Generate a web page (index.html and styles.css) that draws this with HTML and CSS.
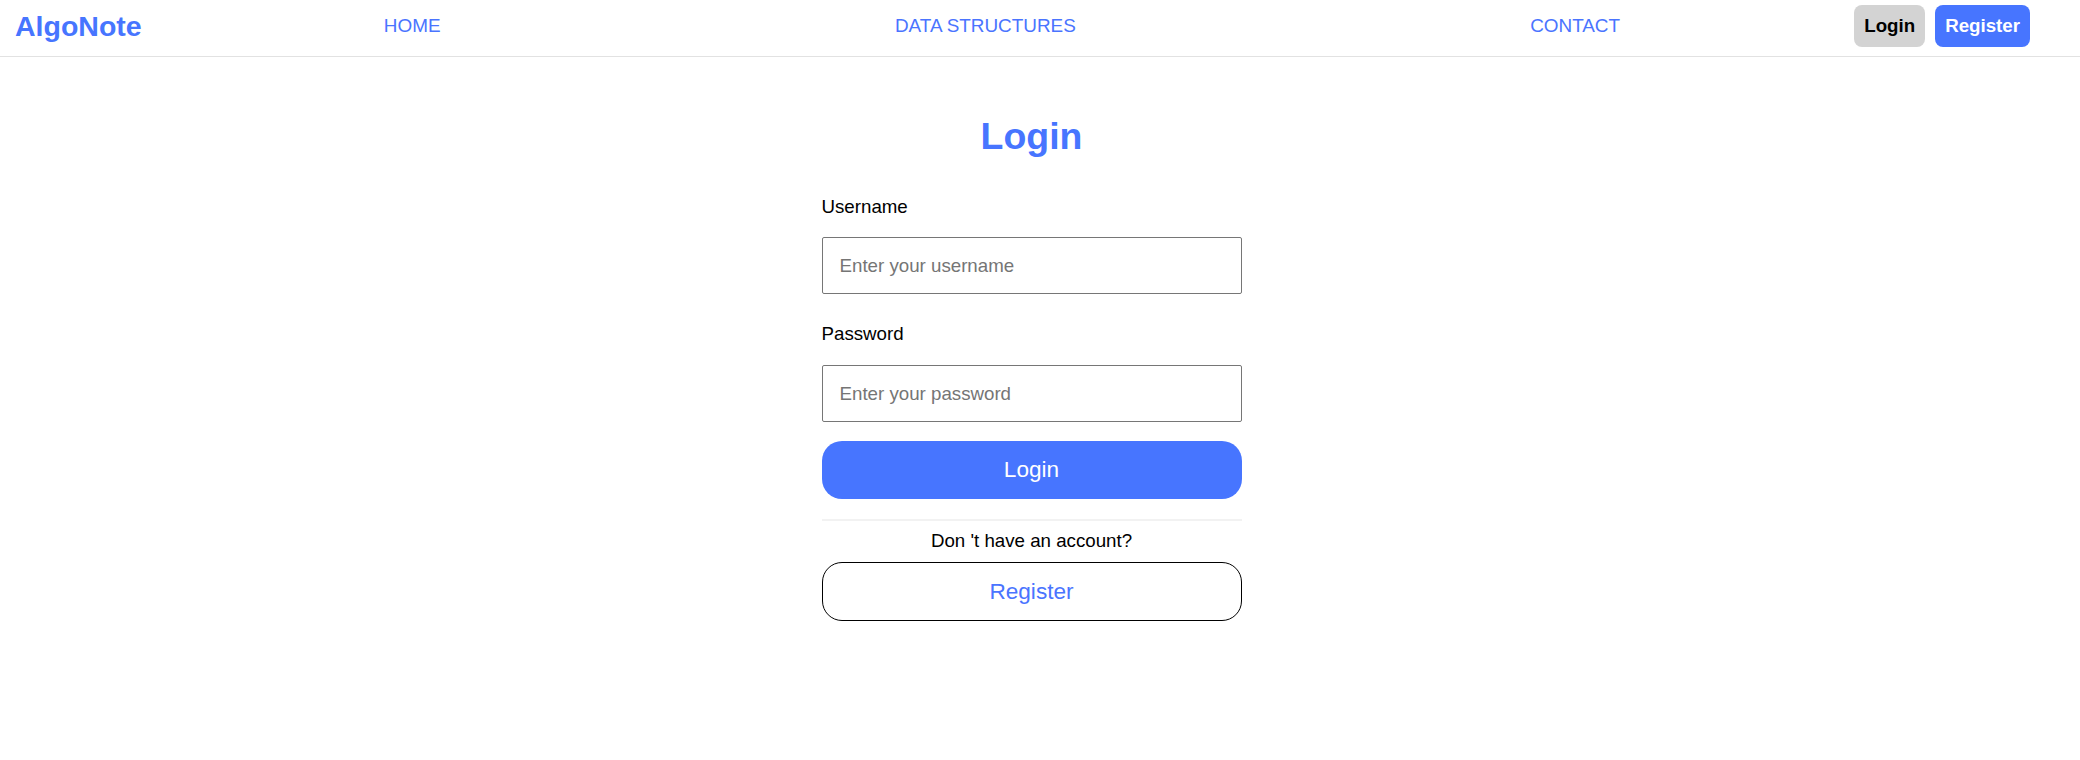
FILE: index.html
```html
<!DOCTYPE html>
<html lang="en">
<head>
<meta charset="utf-8">
<title>AlgoNote - Login</title>
<link rel="stylesheet" href="styles.css">
</head>
<body>
<header class="topbar">
  <a class="logo" href="#">AlgoNote</a>
  <nav class="nav">
    <a class="nav-link" href="#">HOME</a>
    <a class="nav-link" href="#">DATA STRUCTURES</a>
    <a class="nav-link" href="#">CONTACT</a>
  </nav>
  <div class="auth">
    <button class="auth-btn auth-login" type="button">Login</button>
    <button class="auth-btn auth-register" type="button">Register</button>
  </div>
</header>
<main class="main">
  <form class="login-form">
    <h1 class="title">Login</h1>
    <label class="field-label" for="username">Username</label>
    <input class="field-input field-user" id="username" type="text" placeholder="Enter your username">
    <label class="field-label" for="password">Password</label>
    <input class="field-input field-pass" id="password" type="password" placeholder="Enter your password">
    <button class="btn-primary" type="button">Login</button>
    <hr class="divider">
    <p class="no-account">Don 't have an account?</p>
    <button class="btn-outline" type="button">Register</button>
  </form>
</main>
</body>
</html>
```
FILE: styles.css
```css
* {
  box-sizing: border-box;
}

html, body {
  margin: 0;
  padding: 0;
  background: #ffffff;
}

body {
  font-family: "Liberation Sans", Arial, sans-serif;
  font-size: 18.72px;
  color: #000000;
}

.topbar {
  display: flex;
  align-items: center;
  height: 57px;
  padding: 0 50px 4px 15px;
  border-bottom: 1px solid #e2e2e2;
}

.logo {
  font-size: 28.5px;
  font-weight: bold;
  color: #4775ff;
  text-decoration: none;
  margin-right: 15px;
  line-height: 1;
}

.nav {
  flex: 1;
  display: flex;
  justify-content: space-around;
  align-items: center;
}

.nav-link {
  font-size: 18.9px;
  color: #4a74ff;
  text-decoration: none;
  line-height: 1;
}

.auth {
  display: flex;
  gap: 10px;
  margin-left: 7px;
}

.auth-btn {
  font-family: "Liberation Sans", Arial, sans-serif;
  font-size: 18.72px;
  font-weight: bold;
  height: 42px;
  padding: 0 10px;
  border: none;
  border-radius: 8px;
  cursor: pointer;
}

.auth-login {
  background: #d3d3d3;
  color: #000000;
}

.auth-register {
  background: #4775ff;
  color: #ffffff;
}

.main {
  padding-right: 17px;
}

.login-form {
  width: 420px;
  margin: 0 auto;
  display: flex;
  flex-direction: column;
}

.title {
  margin: 57.5px 0 38.5px;
  font-size: 37.44px;
  line-height: 43px;
  font-weight: bold;
  color: #4775ff;
  text-align: center;
}

.field-label {
  display: block;
  line-height: 22px;
  margin-bottom: 19px;
}

.field-input {
  display: block;
  width: 100%;
  height: 57px;
  padding: 0 17px;
  border: 1px solid #767676;
  border-radius: 2px;
  font-family: "Liberation Sans", Arial, sans-serif;
  font-size: 18.72px;
  color: #000000;
  background: #ffffff;
}

.field-input::placeholder {
  color: #757575;
}

.field-user {
  margin-bottom: 29px;
}

.field-pass {
  margin-top: 1px;
  margin-bottom: 19px;
}

.btn-primary {
  height: 58px;
  border: none;
  border-radius: 20px;
  background: #4775ff;
  color: #ffffff;
  font-family: "Liberation Sans", Arial, sans-serif;
  font-size: 22.6px;
  cursor: pointer;
}

.divider {
  margin: 20px 0 0;
  border: none;
  height: 2px;
  background: #f2f2f2;
}

.no-account {
  margin: 9px 0 0;
  line-height: 22px;
  text-align: center;
}

.btn-outline {
  margin-top: 10px;
  height: 59px;
  border: 1px solid #000000;
  border-radius: 20px;
  background: #ffffff;
  color: #4a74ff;
  font-family: "Liberation Sans", Arial, sans-serif;
  font-size: 22.6px;
  cursor: pointer;
}
```
